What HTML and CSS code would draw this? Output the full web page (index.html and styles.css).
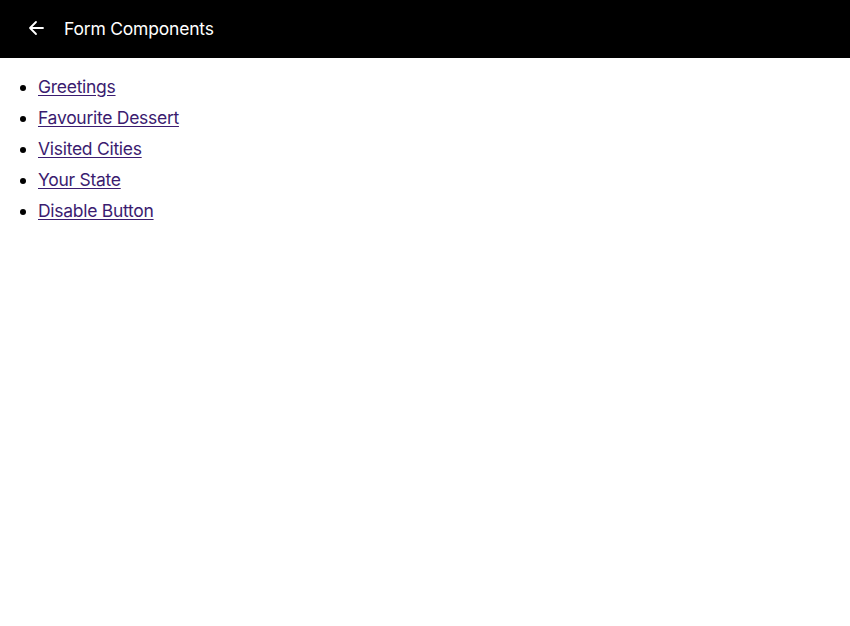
FILE: index.html
```html
<!DOCTYPE html>
<html>
<head>
<meta charset="utf-8">
<link rel="stylesheet" href="styles.css">
</head>
<body>
<header class="toolbar">
  <button class="back" aria-label="Back">
    <svg width="16" height="16" viewBox="0 0 16 16"><path d="M15 8H2M8 2L2 8l6 6" fill="none" stroke="#fff" stroke-width="1.8" stroke-linecap="round" stroke-linejoin="round"/></svg>
  </button>
  <h1 class="title">Form Components</h1>
</header>
<ul class="links">
  <li><a href="#greetings">Greetings</a></li>
  <li><a href="#dessert">Favourite Dessert</a></li>
  <li><a href="#cities">Visited Cities</a></li>
  <li><a href="#state">Your State</a></li>
  <li><a href="#disable">Disable Button</a></li>
</ul>
</body>
</html>
```
FILE: styles.css
```css
html, body {
  margin: 0;
  background: #fff;
  font-family: Inter, "Noto Sans", sans-serif;
}
.toolbar {
  height: 58px;
  background: #000;
  display: flex;
  align-items: center;
  padding-left: 28px;
  padding-bottom: 2px;
  box-sizing: border-box;
}
.back {
  background: none;
  border: 0;
  padding: 0;
  width: 16px;
  height: 16px;
  display: flex;
  margin-top: -1px;
  margin-right: 20px;
}
.title {
  margin: 0;
  color: #fff;
  font-size: 17.5px;
  font-weight: 400;
  letter-spacing: -0.2px;
}
.links {
  margin: 13px 0 0;
  padding-left: 38px;
  font-size: 17.5px;
  line-height: 31px;
}
.links a {
  color: #3b1c70;
  text-decoration: underline;
  text-underline-offset: 2px;
  letter-spacing: -0.28px;
}
```
